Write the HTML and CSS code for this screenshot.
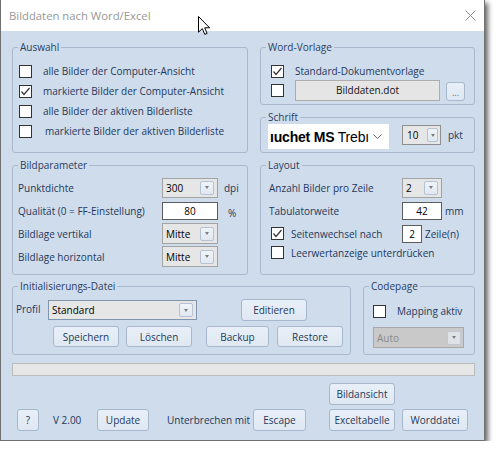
FILE: index.html
```html
<!DOCTYPE html>
<html>
<head>
<meta charset="utf-8">
<title>Bilddaten nach Word/Excel</title>
<link rel="stylesheet" href="styles.css">
</head>
<body>
<div class="window">
  <div class="titlebar">
    <span class="title">Bilddaten nach Word/Excel</span>
    <svg class="close" width="11" height="11" viewBox="0 0 11 11"><path d="M0.5 0.5L10.5 10.5M10.5 0.5L0.5 10.5" stroke="#8c8c8c" stroke-width="1" fill="none"/></svg>
  </div>
  <div class="client">
    <div class="row row1">
      <div class="group g-auswahl">
        <span class="legend">Auswahl</span>
        <div class="cbrow"><span class="cb"></span><span>alle Bilder der Computer-Ansicht</span></div>
        <div class="cbrow"><span class="cb"><svg viewBox="0 0 11 11" width="11" height="11"><polyline points="1.5,5.5 4,8.5 9.5,2" fill="none" stroke="#333" stroke-width="1.2"/></svg></span><span>markierte Bilder der Computer-Ansicht</span></div>
        <div class="cbrow"><span class="cb"></span><span>alle Bilder der aktiven Bilderliste</span></div>
        <div class="cbrow"><span class="cb"></span><span class="shift">markierte Bilder der aktiven Bilderliste</span></div>
      </div>
      <div class="rcol">
        <div class="group g-word">
          <span class="legend">Word-Vorlage</span>
          <div class="cbrow"><span class="cb"><svg viewBox="0 0 11 11" width="11" height="11"><polyline points="1.5,5.5 4,8.5 9.5,2" fill="none" stroke="#333" stroke-width="1.2"/></svg></span><span>Standard-Dokumentvorlage</span></div>
          <div class="wrow2"><span class="cb"></span><span class="btn-gray">Bilddaten.dot</span><span class="btn btn-dots">...</span></div>
        </div>
        <div class="group g-schrift">
          <span class="legend">Schrift</span>
          <div class="fontcombo"><span class="fontval"><b>ıuchet MS</b> Trebı</span><span class="chev"><svg width="9" height="6" viewBox="0 0 9 6"><path d="M0.5 0.5L4.5 4.5L8.5 0.5" fill="none" stroke="#666" stroke-width="1"/></svg></span></div>
          <div class="combo spin"><span class="val">10</span><span class="dd"><i class="tri"></i></span></div>
          <span class="pkt">pkt</span>
        </div>
      </div>
    </div>

    <div class="row row2">
      <div class="group g-bild">
        <span class="legend">Bildparameter</span>
        <div class="frow"><span class="flabel">Punktdichte</span><div class="combo c56"><span class="val">300</span><span class="dd"><i class="tri"></i></span></div><span class="unit">dpi</span></div>
        <div class="frow"><span class="flabel">Qualität (0 = FF-Einstellung)</span><span class="input c56">80</span><span class="unit pct">%</span></div>
        <div class="frow"><span class="flabel">Bildlage vertikal</span><div class="combo c56 h21"><span class="val">Mitte</span><span class="dd"><i class="tri"></i></span></div></div>
        <div class="frow"><span class="flabel">Bildlage horizontal</span><div class="combo c56 h21"><span class="val">Mitte</span><span class="dd"><i class="tri"></i></span></div></div>
      </div>
      <div class="group g-layout">
        <span class="legend">Layout</span>
        <div class="frow lrow"><span class="llabel">Anzahl Bilder pro Zeile</span><div class="combo c40"><span class="val">2</span><span class="dd"><i class="tri"></i></span></div></div>
        <div class="frow lrow"><span class="llabel">Tabulatorweite</span><span class="input c40">42</span><span class="unit mm">mm</span></div>
        <div class="frow crow"><span class="cb"><svg viewBox="0 0 11 11" width="11" height="11"><polyline points="1.5,5.5 4,8.5 9.5,2" fill="none" stroke="#333" stroke-width="1.2"/></svg></span><span class="clabel">Seitenwechsel nach</span><span class="input c20">2</span><span class="unit mm">Zeile(n)</span></div>
        <div class="frow crow last"><span class="cb"></span><span>Leerwertanzeige unterdrücken</span></div>
      </div>
    </div>

    <div class="row row3">
      <div class="group g-init">
        <span class="legend">Initialisierungs-Datei</span>
        <div class="irow1"><span class="plabel">Profil</span><div class="combo c149 focus"><span class="val">Standard</span><span class="dd"><i class="tri"></i></span></div><span class="btn b-edit">Editieren</span></div>
        <div class="irow2"><span class="btn b66 b-speichern">Speichern</span><span class="btn b66 b-loeschen">Löschen</span><span class="btn b63 b-backup">Backup</span><span class="btn b66 b-restore">Restore</span></div>
      </div>
      <div class="group g-code">
        <span class="legend">Codepage</span>
        <div class="cbrow"><span class="cb"></span><span>Mapping aktiv</span></div>
        <div class="combo disabled c91"><span class="val">Auto</span><span class="dd"><i class="tri"></i></span></div>
      </div>
    </div>

    <div class="progress"></div>

    <div class="brow1"><span class="btn b66">Bildansicht</span></div>
    <div class="brow2">
      <span class="btn b-help">?</span>
      <span class="ver">V 2.00</span>
      <span class="btn b-update">Update</span>
      <span class="unterbr">Unterbrechen mit</span>
      <span class="btn b-escape">Escape</span>
      <span class="btn b66 b-excel">Exceltabelle</span>
      <span class="btn b66 b-word">Worddatei</span>
    </div>
  </div>
  <svg class="cursor" width="13" height="20" viewBox="0 0 13 20"><path d="M0.5 0.5L0.5 16.2L4.3 12.6L6.8 18.4L9.1 17.4L6.7 11.8L11.6 11.8Z" fill="#fff" stroke="#000" stroke-width="1" stroke-linejoin="miter"/></svg>
</div>
</body>
</html>
```

FILE: styles.css
```css
* { box-sizing: border-box; }

body {
  margin: 0;
  background: #ffffff;
  font-family: "Open Sans", "Noto Sans", sans-serif;
  font-size: 10px;
  color: #1e395b;
}

.window {
  position: relative;
  width: 485px;
  height: 441px;
  border: 1px solid #707070;
  border-top: 0;
  background: #cfdcec;
  box-shadow: 3px 3px 5px rgba(0, 0, 0, 0.6);
}

.titlebar {
  height: 31px;
  background: #ffffff;
  display: flex;
  align-items: center;
  justify-content: space-between;
  padding: 0 8px 0 8px;
}

.title {
  font-size: 11.3px;
  color: #979797;
  line-height: 31px;
}

.close { display: block; margin-top: -1px; }

.cursor {
  position: absolute;
  left: 197px;
  top: 16px;
}

.client {
  height: 409px;
  padding: 16px 0 0 11px;
}

.row {
  display: grid;
  grid-template-columns: 236px 215px;
  column-gap: 12px;
}

.row1 { height: 106px; }
.row2 { height: 110px; margin-top: 12px; }
.row3 { height: 69px; margin-top: 11px; grid-template-columns: 339px 112px; }

.group {
  position: relative;
  border: 1px solid #a9b8cc;
  border-radius: 3px;
}

.legend {
  position: absolute;
  left: 5px;
  top: -8px;
  padding: 0 2px;
  line-height: 14px;
  background: #cfdcec;
  color: #2a4062;
}

.cbrow {
  display: flex;
  align-items: center;
  height: 20px;
}

.cb {
  flex: none;
  width: 13px;
  height: 13px;
  border: 1px solid #333333;
  background: #ffffff;
  margin-right: 11px;
  display: flex;
}

.cb svg { display: block; }

.shift { margin-left: 2px; }

/* Auswahl */
.g-auswahl { padding: 13px 0 0 6px; }

/* right column */
.rcol {
  display: flex;
  flex-direction: column;
  gap: 12px;
}

.g-word { height: 58px; padding: 13px 0 0 10px; }

.wrow2 {
  display: flex;
  align-items: center;
  height: 22px;
  margin-top: -2px;
}

.btn-gray {
  width: 145px;
  height: 21px;
  border: 1px solid #adadad;
  background: #e5e5e5;
  color: #111;
  display: flex;
  align-items: center;
  justify-content: center;
}

.btn {
  flex: none;
  height: 22px;
  border: 1px solid #a7b7cc;
  border-radius: 3px;
  background: linear-gradient(#e8eff8, #dfe8f2);
  color: #1e395b;
  display: flex;
  align-items: center;
  justify-content: center;
  white-space: nowrap;
}

.btn-dots {
  width: 19px;
  height: 19px;
  margin-left: 6px;
  margin-top: 2px;
  color: #666;
  font-size: 9px;
  align-items: flex-end;
  padding-bottom: 3px;
  line-height: 8px;
}

.g-schrift {
  height: 36px;
  padding: 6px 0 0 7px;
  display: flex;
  align-items: flex-start;
}

.fontcombo {
  width: 121px;
  height: 25px;
  background: #ffffff;
  display: flex;
  align-items: center;
  padding-left: 2px;
}

.fontval {
  flex: none;
  white-space: nowrap;
  font-family: "Liberation Sans", sans-serif;
  font-size: 14px;
  letter-spacing: -0.2px;
  color: #000;
}

.fontval b { font-weight: bold; }

.chev { margin-left: 4px; display: flex; }
.chev svg { display: block; }

.combo {
  display: flex;
  align-items: center;
  height: 20px;
  border: 1px solid #a3a3a3;
  background: #e6e6e6;
  color: #000;
}

.combo .val {
  flex: 1;
  padding-left: 3px;
  white-space: nowrap;
}

.combo .dd {
  flex: none;
  width: 14px;
  height: 14px;
  margin-right: 3px;
  border: 1px solid #b4c2d4;
  border-radius: 2px;
  background: linear-gradient(#f0f4f9, #e0e8f1);
  display: flex;
  align-items: center;
  justify-content: center;
}

.tri {
  display: block;
  width: 0;
  height: 0;
  border-left: 2.5px solid transparent;
  border-right: 2.5px solid transparent;
  border-top: 3px solid #7d7d7d;
}

.spin {
  width: 39px;
  margin-left: 13px;
  margin-top: 1px;
  border-color: #8f8f8f;
}

.spin .val { padding-left: 4px; }
.spin .dd { width: 11px; margin-right: 2px; }

.pkt { margin-left: 7px; line-height: 20px; margin-top: 1px; }

/* Bildparameter */
.g-bild { padding: 10px 0 0 5px; }

.frow {
  display: flex;
  align-items: center;
  height: 23px;
}

.flabel { width: 144px; flex: none; white-space: nowrap; }

.c56 { width: 56px; }
.c40 { width: 40px; }
.c20 { width: 20px; }
.c149 { width: 149px; }
.c91 { width: 91px; }
.h21 { height: 21px; }

.input {
  display: flex;
  align-items: center;
  justify-content: center;
  height: 18px;
  border: 1px solid #5c5c5c;
  background: #ffffff;
  color: #000;
  flex: none;
}

.unit { margin-left: 6px; }
.pct { margin-left: 10px; margin-top: 4px; }
.mm { margin-left: 3px; }

/* Layout */
.g-layout { padding: 10px 0 0 0; }
.lrow { padding-left: 8px; }
.llabel { width: 133px; flex: none; white-space: nowrap; }
.crow { padding-left: 10px; }
.crow .cb { margin-right: 7px; }
.clabel { width: 111px; flex: none; white-space: nowrap; }
.crow.last { height: 15px; }

/* Init */
.g-init { padding: 12px 0 0 3px; }

.irow1 {
  display: flex;
  align-items: center;
  height: 22px;
}

.plabel { width: 32px; flex: none; margin-top: -3px; }

.focus { border-color: #8095ae; }

.b-edit { width: 66px; margin-left: 44px; }

.irow2 {
  display: flex;
  align-items: center;
  height: 21px;
  margin-top: 5px;
}

.irow2 .btn { height: 21px; }
.b66 { width: 66px; }
.b63 { width: 63px; }
.b-speichern { margin-left: 37px; }
.b-loeschen { margin-left: 7px; }
.b-backup { margin-left: 14px; }
.b-restore { margin-left: 8px; }

/* Codepage */
.g-code { padding: 14px 0 0 9px; }

.disabled {
  margin-top: 6px;
  height: 21px;
  background: #c9c9c9;
  border-color: #a8a8a8;
  color: #8a8a8a;
}

.disabled .dd {
  background: #dfe3e8;
  border-color: #c2c8d0;
  margin-right: 2px;
}

/* progress */
.progress {
  width: 463px;
  height: 13px;
  margin-top: 8px;
  border: 1px solid #bcbcbc;
  background: #e6e6e6;
}

.brow1 {
  display: flex;
  margin-top: 7px;
  padding-left: 317px;
}

.brow1 .btn { height: 22px; }

.brow2 {
  display: flex;
  align-items: center;
  height: 22px;
  margin-top: 4px;
}

.b-help { width: 22px; margin-left: 5px; }
.ver { width: 44px; margin-left: 14px; flex: none; }
.b-update { width: 52px; }
.unterbr { width: 86px; margin-left: 18px; flex: none; white-space: nowrap; }
.b-escape { width: 53px; }
.b-excel { margin-left: 23px; }
.b-word { margin-left: 7px; }
```
